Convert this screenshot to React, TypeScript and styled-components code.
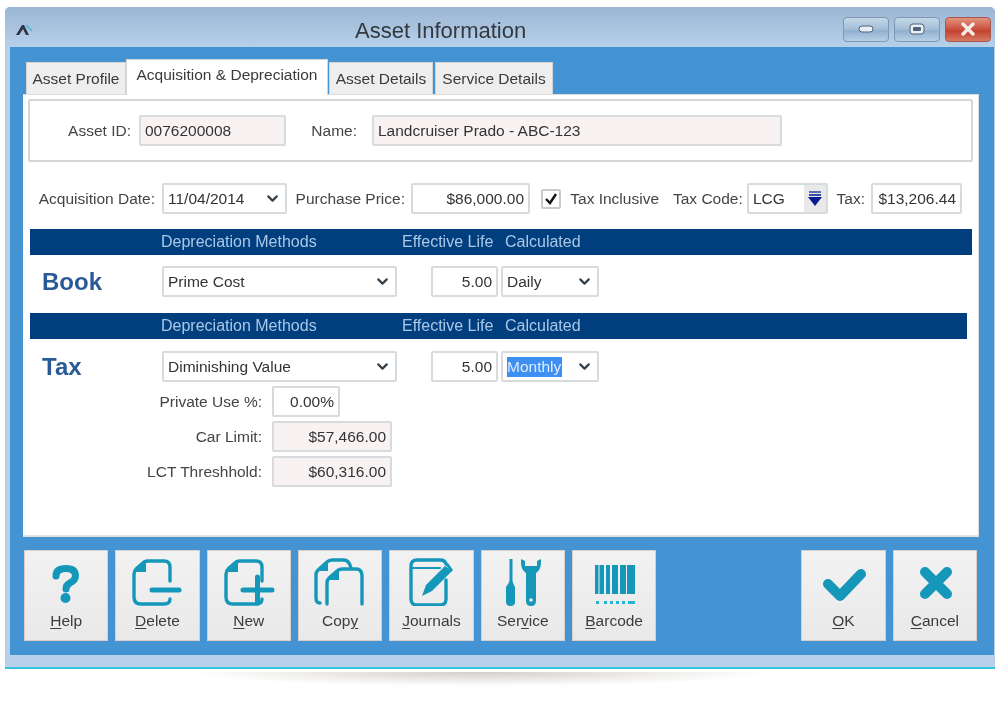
import React from "react";
import styled, { createGlobalStyle } from "styled-components";
import { ChevronDown } from "lucide-react";

const GlobalStyle = createGlobalStyle`
  html, body {
    margin: 0;
    padding: 0;
    background: #fff;
    color: #3a3a3a;
    font-family: "Liberation Sans", Arial, sans-serif;
    font-size: 16px;
  }
`;

const Page = styled.div`
  width: 1000px;
  height: 723px;
  padding: 7px 5px 0 5px;
  box-sizing: border-box;
  overflow: hidden;
`;

const Window = styled.div`
  filter: blur(0.55px);
  border-bottom: 2px solid #35c4e0;
  background: #b9d0ea;
  padding: 0 1px 12px 5px;
  border-radius: 5px 5px 0 0;
`;

const TitleBar = styled.div`
  height: 40px;
  margin: 0 -1px 0 -5px;
  padding: 0 4px 0 10px;
  display: flex;
  align-items: center;
  background: linear-gradient(#9bb6d4, #b7d0ea);
  border-radius: 5px 5px 0 0;
`;

const Logo = styled.svg`
  width: 20px;
  height: 14px;
  margin-top: 6px;
`;

const Title = styled.div`
  margin-left: 320px;
  font-size: 22px;
  color: #33393f;
  flex: 1;
  margin-top: 7px;
`;

const Controls = styled.div`
  display: flex;
  gap: 5px;
  margin-top: 4px;
`;

const Control = styled.div<{ $close?: boolean }>`
  width: 46px;
  height: 25px;
  box-sizing: border-box;
  border: 1px solid ${(p) => (p.$close ? "#a8544a" : "#7f97b0")};
  border-radius: 4px;
  display: flex;
  align-items: center;
  justify-content: center;
  background: ${(p) =>
    p.$close
      ? "linear-gradient(#e2937f, #c9503c 50%, #c2402e 55%, #d87a62)"
      : "linear-gradient(#c4d8ea, #a3bdd6 50%, #8fb0cf 55%, #b6cfe6)"};
`;

const Body = styled.div`
  background: #4493d2;
  padding: 12px 15px 14px 13px;
`;

const Tabs = styled.div`
  display: flex;
  align-items: flex-end;
  height: 35px;
  padding-left: 3px;
`;

const Tab = styled.div<{ $w: number; $active?: boolean; $mr?: number }>`
  width: ${(p) => p.$w}px;
  height: ${(p) => (p.$active ? 36 : 32)}px;
  box-sizing: border-box;
  margin-right: ${(p) => p.$mr ?? 2}px;
  margin-bottom: ${(p) => (p.$active ? -1 : 0)}px;
  position: relative;
  background: ${(p) => (p.$active ? "#fff" : "#eeeeee")};
  border: 1px solid #d5d5d5;
  border-bottom: none;
  font-size: 15.5px;
  text-align: center;
  line-height: ${(p) => (p.$active ? 30 : 31)}px;
  white-space: nowrap;
`;

const Panel = styled.div`
  height: 443px;
  box-sizing: border-box;
  background: #fff;
  padding-top: 4px;
  border-top: 1px solid #dcdcdc;
  border-right: 1px solid #dcdcdc;
  border-bottom: 2px solid #e8e2dc;
`;

const GroupBox = styled.div`
  height: 63px;
  box-sizing: border-box;
  margin: 0 5px;
  padding-top: 14px;
  border: 2px solid #d4d6d8;
  border-radius: 2px;
  display: flex;
  align-items: flex-start;
`;

const Row = styled.div<{ $top: number; $left?: number }>`
  display: flex;
  align-items: center;
  margin-top: ${(p) => p.$top}px;
  padding-left: ${(p) => p.$left ?? 0}px;
`;

const Label = styled.div<{ $w: number; $ml?: number }>`
  width: ${(p) => p.$w}px;
  margin-left: ${(p) => p.$ml ?? 0}px;
  flex: none;
  font-size: 15.5px;
  line-height: 31px;
  text-align: right;
  white-space: nowrap;
  color: #444;
`;

const Field = styled.div<{ $w: number; $ml?: number; $gray?: boolean; $right?: boolean }>`
  width: ${(p) => p.$w}px;
  height: 31px;
  margin-left: ${(p) => p.$ml ?? 0}px;
  flex: none;
  box-sizing: border-box;
  padding: 0 4px 0 4px;
  display: flex;
  align-items: center;
  justify-content: ${(p) => (p.$right ? "flex-end" : "space-between")};
  background: ${(p) => (p.$gray ? "#f8f3f2" : "#fff")};
  border: 2px solid #d8dbde;
  border-radius: 2px;
  font-size: 15.5px;
  white-space: nowrap;
  color: #333;
`;

const Chevron = styled(ChevronDown)`
  width: 17px;
  height: 17px;
  stroke-width: 3;
  color: #33404a;
  flex: none;
`;

const Selected = styled.span`
  background: #3d8ff0;
  color: #dfeaff;
  padding-right: 1px;
  line-height: 20px;
`;

const Check = styled.div`
  width: 20px;
  height: 20px;
  margin-left: 11px;
  flex: none;
  box-sizing: border-box;
  border: 2px solid #c8cbce;
  border-radius: 2px;
  display: flex;
  align-items: center;
  justify-content: center;
`;

const LookupButton = styled.div`
  width: 22px;
  height: 27px;
  margin-right: -4px;
  background: #e9e9e9;
  display: flex;
  align-items: center;
  justify-content: center;
`;

const Band = styled.div<{ $w: number; $top: number }>`
  width: ${(p) => p.$w}px;
  height: 26px;
  margin: ${(p) => p.$top}px 0 0 7px;
  padding-left: 131px;
  box-sizing: border-box;
  display: flex;
  align-items: center;
  background: #003e7e;
  color: #a9c8e8;
  font-size: 16px;
  white-space: nowrap;
`;

const BandCell = styled.div<{ $w: number }>`
  width: ${(p) => p.$w}px;
  flex: none;
`;

const SectionName = styled.div`
  width: 120px;
  flex: none;
  font-size: 24px;
  font-weight: 700;
  color: #2a5a96;
`;

const Footer = styled.div`
  margin: 13px 2px 0 1px;
  display: flex;
  justify-content: space-between;
`;

const ButtonGroup = styled.div`
  display: flex;
  gap: 7px;
`;

const ActionButton = styled.div`
  width: 84.33px;
  height: 91px;
  box-sizing: border-box;
  padding-top: 5px;
  display: flex;
  flex-direction: column;
  align-items: center;
  background: linear-gradient(#f2f2f2, #e9e9e9);
  border: 1px solid #d9cfc8;
  font-size: 15.5px;
  color: #3c3c3c;
`;

const ActionIcon = styled.svg`
  width: 60px;
  height: 50px;
  flex: none;
  color: #1597b9;
`;

const ActionText = styled.div`
  margin-top: 6px;
  u {
    text-underline-offset: 2px;
  }
`;

const Shadow = styled.div`
  width: 570px;
  height: 14px;
  margin: 3px 0 0 190px;
  background: radial-gradient(ellipse at 50% 0, #d2cfcb 0%, #efeeec 45%, #fff 72%);
`;

const ICON_STROKE = { fill: "none", stroke: "currentColor", strokeWidth: 3.4, strokeLinecap: "round", strokeLinejoin: "round" } as const;

const DocBase = () => (
  <>
    <path d="M43 25V11Q43 5 37 5H21Q19 5 17 6L10 12Q7 15 7 18V41Q7 48 14 48H37Q43 48 43 43" {...ICON_STROKE} />
    <path d="M8 16L19 5V16Z" fill="currentColor" />
  </>
);

const HelpIcon = () => (
  <ActionIcon viewBox="0 0 60 50">
    <path d="M20 20Q20 12.5 30 12.5Q39.5 12.5 39.5 20Q39.5 24 34 27Q30 29 30 33" fill="none" stroke="currentColor" strokeWidth="7" strokeLinecap="round" />
    <circle cx="29.5" cy="42" r="5" fill="currentColor" />
  </ActionIcon>
);

const DeleteIcon = () => (
  <ActionIcon viewBox="0 0 60 50">
    <DocBase />
    <path d="M25 34H52" fill="none" stroke="currentColor" strokeWidth="5" strokeLinecap="round" />
  </ActionIcon>
);

const NewIcon = () => (
  <ActionIcon viewBox="0 0 60 50">
    <DocBase />
    <path d="M24 34H53M38.5 21V47" fill="none" stroke="currentColor" strokeWidth="5" strokeLinecap="round" />
  </ActionIcon>
);

const CopyIcon = () => (
  <ActionIcon viewBox="0 0 60 50">
    <path d="M41 12Q39 4 34 4H22Q19 4 17 6L8 14Q6 16 6 19V42Q6 47 10 47" {...ICON_STROKE} />
    <path d="M7 15L18 4V15Z" fill="currentColor" />
    <path d="M52 48V20Q52 13 46 13H32Q29 13 27 15L19 22Q17 24 17 27V48" {...ICON_STROKE} />
    <path d="M18 24L29 13V24Z" fill="currentColor" />
  </ActionIcon>
);

const JournalsIcon = () => (
  <ActionIcon viewBox="0 0 60 50">
    <path d="M45 24V43Q45 49 39 49H16Q10 49 10 43V10Q10 4 16 4H39Q44 4 45 8" {...ICON_STROKE} />
    <path d="M11 12H39" {...ICON_STROKE} strokeWidth={2.2} />
    <path d="M21 40L25 29L44 10L51 15L31 35Z" fill="currentColor" />
    <path d="M44 8L47 7L52 14L50 16Z" fill="currentColor" />
  </ActionIcon>
);

const ServiceIcon = () => (
  <ActionIcon viewBox="0 0 60 50">
    <path d="M16.5 3H19.5V24Q19.5 26 20.5 28L22 31V46Q22 50 17.5 50Q13 50 13 46V31L15 28Q16.5 26 16.5 24Z" fill="currentColor" />
    <path d="M28 6Q28 14 33 17V45Q33 50 38 50Q43 50 43 45V17Q48 14 48 6V3L44 5V10H32V5L28 3Z" fill="currentColor" />
    <circle cx="38" cy="44" r="1.8" fill="#eee" />
  </ActionIcon>
);

const BarcodeIcon = () => (
  <ActionIcon viewBox="0 0 60 50">
    {[
      [11, 3.5],
      [15.5, 4.5],
      [22, 4],
      [28, 6],
      [36, 6],
      [43, 8],
    ].map(([x, w]) => (
      <rect key={x} x={x} y="9" width={w} height="29" fill="currentColor" />
    ))}
    {[12, 20, 26, 32, 38, 44].map((x, i) => (
      <rect key={x} x={x} y="45" width={i === 5 ? 7 : 3} height="3" fill="#25b3d6" />
    ))}
  </ActionIcon>
);

const OkIcon = () => (
  <ActionIcon viewBox="0 0 60 50">
    <path d="M14 28L26 40L47 18" fill="none" stroke="currentColor" strokeWidth="10" strokeLinecap="round" strokeLinejoin="round" />
  </ActionIcon>
);

const CancelIcon = () => (
  <ActionIcon viewBox="0 0 60 50">
    <path d="M20 16L42 38M42 16L20 38" fill="none" stroke="currentColor" strokeWidth="10" strokeLinecap="round" />
  </ActionIcon>
);

const BandLabels = () => (
  <>
    <BandCell $w={241}>Depreciation Methods</BandCell>
    <BandCell $w={103}>Effective Life</BandCell>
    <BandCell $w={90}>Calculated</BandCell>
  </>
);

export default function App() {
  return (
    <Page>
      <GlobalStyle />
      <Window>
        <TitleBar>
          <Logo viewBox="0 0 20 14">
            <path d="M1 12L7 2H9L14 12H11L8 6L4 12Z" fill="#2c3644" />
            <path d="M11 2L17 8" stroke="#4fb4dc" strokeWidth="1.6" />
          </Logo>
          <Title>Asset Information</Title>
          <Controls>
            <Control>
              <svg width="16" height="8" viewBox="0 0 16 8">
                <rect x="1" y="1" width="14" height="6" rx="3" fill="#e8eef4" stroke="#50657c" />
              </svg>
            </Control>
            <Control>
              <svg width="16" height="12" viewBox="0 0 16 12">
                <rect x="1" y="1" width="14" height="10" rx="3" fill="#e8eef4" stroke="#50657c" />
                <rect x="4" y="4" width="8" height="4" rx="1" fill="#50657c" />
              </svg>
            </Control>
            <Control $close>
              <svg width="16" height="14" viewBox="0 0 16 14">
                <path d="M3 2L13 12M13 2L3 12" stroke="#f4ecea" strokeWidth="3.4" strokeLinecap="round" />
              </svg>
            </Control>
          </Controls>
        </TitleBar>
        <Body>
          <Tabs>
            <Tab $w={100} $mr={0}>
              Asset Profile
            </Tab>
            <Tab $w={202} $mr={1} $active>
              Acquisition &amp; Depreciation
            </Tab>
            <Tab $w={104}>Asset Details</Tab>
            <Tab $w={118}>Service Details</Tab>
          </Tabs>
          <Panel>
            <GroupBox>
              <Label $w={101}>Asset ID:</Label>
              <Field $w={147} $ml={8} $gray>
                0076200008
              </Field>
              <Label $w={46} $ml={25}>
                Name:
              </Label>
              <Field $w={410} $ml={15} $gray>
                Landcruiser Prado - ABC-123
              </Field>
            </GroupBox>

            <Row $top={21} $left={14}>
              <Label $w={118}>Acquisition Date:</Label>
              <Field $w={125} $ml={7}>
                11/04/2014
                <Chevron />
              </Field>
              <Label $w={110} $ml={8}>
                Purchase Price:
              </Label>
              <Field $w={119} $ml={6} $right>
                $86,000.00
              </Field>
              <Check>
                <svg width="14" height="14" viewBox="0 0 14 14">
                  <path d="M2 7L6 11L12 2" fill="none" stroke="#111" strokeWidth="2.4" />
                </svg>
              </Check>
              <Label $w={93} $ml={5}>
                Tax Inclusive
              </Label>
              <Label $w={68} $ml={14}>
                Tax Code:
              </Label>
              <Field $w={81} $ml={6}>
                LCG
                <LookupButton>
                  <svg width="16" height="18" viewBox="0 0 16 18">
                    <rect x="2" y="1" width="12" height="2" fill="#5a6fb8" />
                    <rect x="2" y="4" width="12" height="2" fill="#3a4aa8" />
                    <path d="M1 7H15L8 16Z" fill="#0a1a90" />
                  </svg>
                </LookupButton>
              </Field>
              <Label $w={29} $ml={8}>
                Tax:
              </Label>
              <Field $w={91} $ml={6} $right>
                $13,206.44
              </Field>
            </Row>

            <Band $w={942} $top={15}>
              <BandLabels />
            </Band>
            <Row $top={11} $left={19}>
              <SectionName>Book</SectionName>
              <Field $w={235}>
                Prime Cost
                <Chevron />
              </Field>
              <Field $w={67} $ml={34} $right>
                5.00
              </Field>
              <Field $w={98} $ml={3}>
                Daily
                <Chevron />
              </Field>
            </Row>

            <Band $w={937} $top={16}>
              <BandLabels />
            </Band>
            <Row $top={12} $left={19}>
              <SectionName>Tax</SectionName>
              <Field $w={235}>
                Diminishing Value
                <Chevron />
              </Field>
              <Field $w={67} $ml={34} $right>
                5.00
              </Field>
              <Field $w={98} $ml={3}>
                <Selected>Monthly</Selected>
                <Chevron />
              </Field>
            </Row>
            <Row $top={4}>
              <Label $w={239}>Private Use %:</Label>
              <Field $w={68} $ml={10} $right>
                0.00%
              </Field>
            </Row>
            <Row $top={4}>
              <Label $w={239}>Car Limit:</Label>
              <Field $w={120} $ml={10} $gray $right>
                $57,466.00
              </Field>
            </Row>
            <Row $top={4}>
              <Label $w={239}>LCT Threshhold:</Label>
              <Field $w={120} $ml={10} $gray $right>
                $60,316.00
              </Field>
            </Row>
          </Panel>
          <Footer>
            <ButtonGroup>
              <ActionButton>
                <HelpIcon />
                <ActionText>
                  <u>H</u>elp
                </ActionText>
              </ActionButton>
              <ActionButton>
                <DeleteIcon />
                <ActionText>
                  <u>D</u>elete
                </ActionText>
              </ActionButton>
              <ActionButton>
                <NewIcon />
                <ActionText>
                  <u>N</u>ew
                </ActionText>
              </ActionButton>
              <ActionButton>
                <CopyIcon />
                <ActionText>
                  Cop<u>y</u>
                </ActionText>
              </ActionButton>
              <ActionButton>
                <JournalsIcon />
                <ActionText>
                  <u>J</u>ournals
                </ActionText>
              </ActionButton>
              <ActionButton>
                <ServiceIcon />
                <ActionText>
                  Ser<u>v</u>ice
                </ActionText>
              </ActionButton>
              <ActionButton>
                <BarcodeIcon />
                <ActionText>
                  <u>B</u>arcode
                </ActionText>
              </ActionButton>
            </ButtonGroup>
            <ButtonGroup>
              <ActionButton>
                <OkIcon />
                <ActionText>
                  <u>O</u>K
                </ActionText>
              </ActionButton>
              <ActionButton>
                <CancelIcon />
                <ActionText>
                  <u>C</u>ancel
                </ActionText>
              </ActionButton>
            </ButtonGroup>
          </Footer>
        </Body>
      </Window>
      <Shadow />
    </Page>
  );
}
